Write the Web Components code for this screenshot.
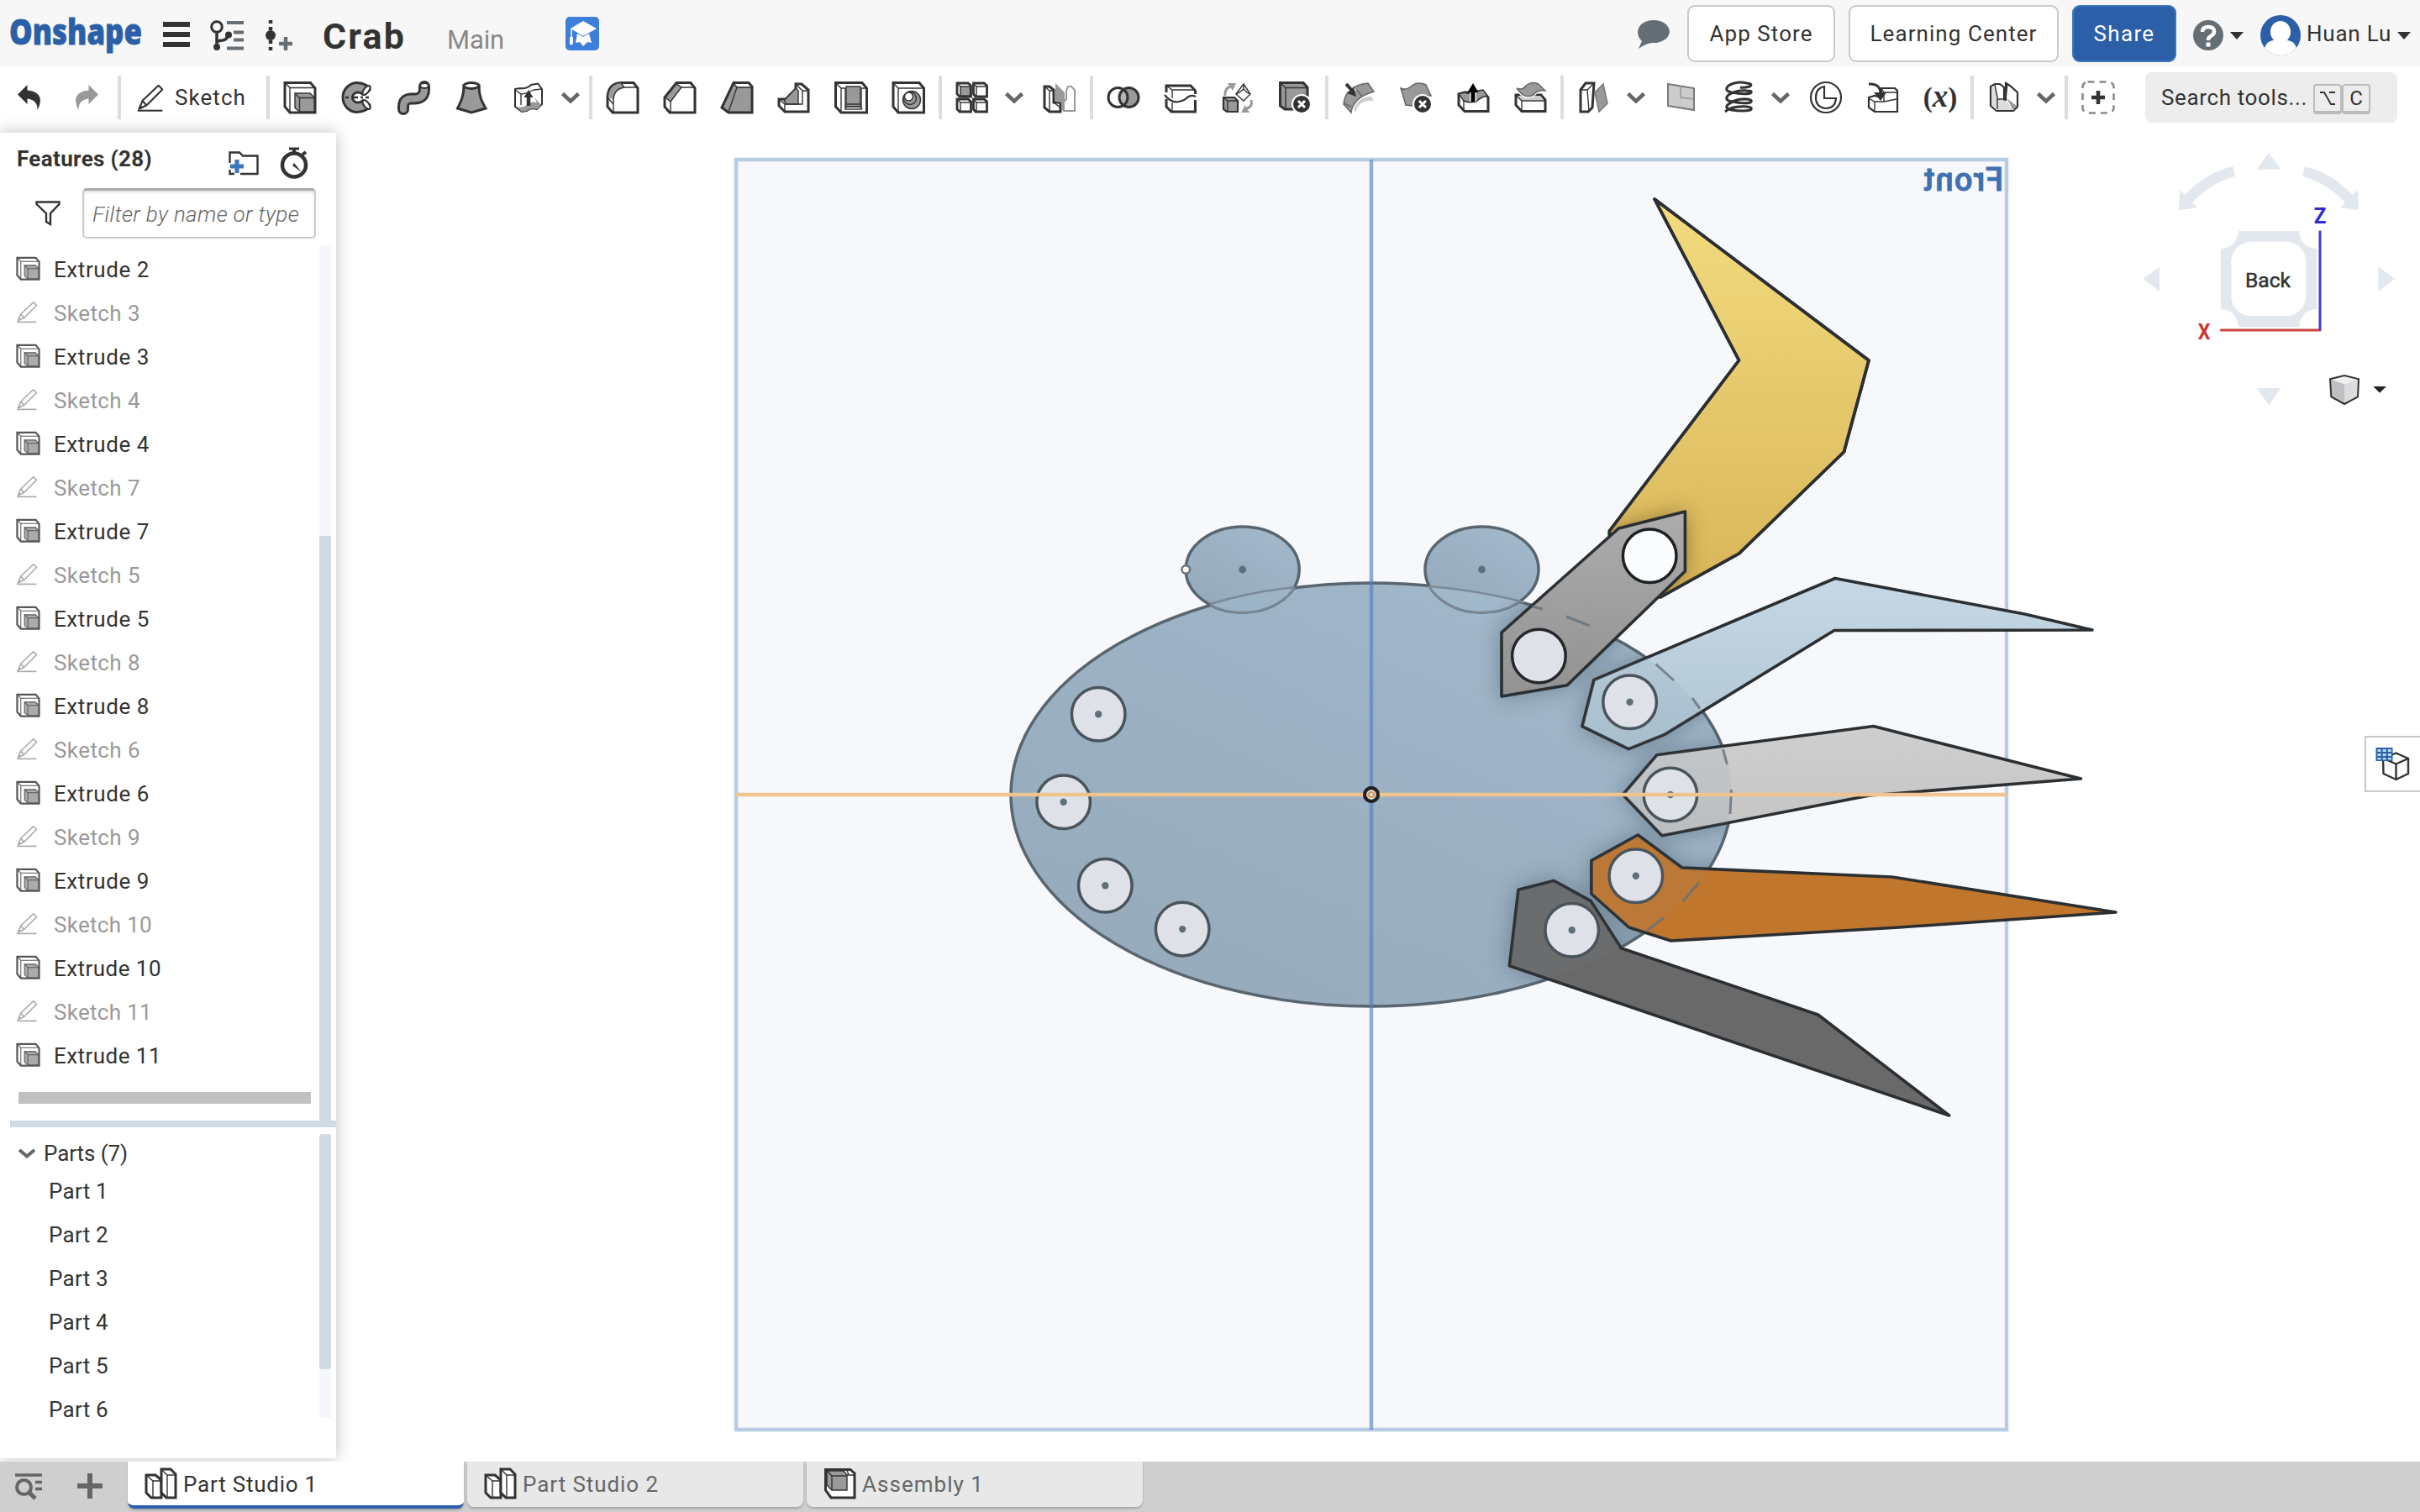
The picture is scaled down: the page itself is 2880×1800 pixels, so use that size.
<!DOCTYPE html>
<html lang="en">
<head>
<meta charset="utf-8">
<title>Crab</title>
<style>
html,body{margin:0;width:2880px;height:1800px;overflow:hidden;background:#fff}
</style>
</head>
<body>
<cad-app></cad-app>
<script>
const ICONS = {
  extrude:`<path class="o w" d="M2 2.500H32.500L38 9V38H8L2 31Z"/><path class="t" d="M2 2.500L8 8.500H38M8 8.500V37"/><path class="t g" d="M14 15H32L37 20V37H19.500L14 32.500Z"/><path class="t" d="M14 15L19.500 20.500H37M19.500 20.500V37"/>`,
  revolve:`<path class="o g" d="M31 5.500Q26 2.500 20 2.500A17 17.500 0 0 0 20 37.500Q26 37.500 31 34.500Q35 32 35 29L27 23.500Q24 26.500 20.500 26A6 6 0 0 1 20.500 14Q24 13.500 27 16.500L35 11Q35 8 31 5.500Z" stroke-linejoin="round"/><ellipse class="m w" cx="31" cy="11.500" rx="3" ry="6.500" transform="rotate(38 31 11.500)"/><ellipse class="m w" cx="31" cy="28.500" rx="3" ry="6.500" transform="rotate(-38 31 28.500)"/><path d="M6 20h4M16 20h5M24 20h3M30 20h4" stroke="#333" stroke-width="2.500"/>`,
  sweep:`<path d="M7 34V31Q7 22 16 21.500H21Q32 21 32 10V7" fill="none" stroke="#333" stroke-width="14" stroke-linecap="round"/><path d="M7 34V31Q7 22 16 21.500H21Q32 21 32 10V7" fill="none" stroke="#999" stroke-width="8" stroke-linecap="round"/><ellipse class="m w" cx="32" cy="6" rx="5" ry="3"/>`,
  loft:`<path class="o g" d="M11 6C11 18 8 24 3.500 33L20 38L37 33C32 24 29 18 29 6Z"/><ellipse class="o w" cx="20" cy="6" rx="9" ry="3.500"/>`,
  thicken:`<path class="w" stroke="#333" stroke-width="2" d="M4 10L10 9Q18 10 23 5L31 3.500L36 10V28L30 34Q22 32 18 36L12 37L4 31Z"/><path d="M5 31Q12 33 17 30Q22 24 30 26L27 20L35 29L30 34Q22 32 18 36L12 37Z" fill="#999"/><path class="t" d="M4 11L11 16Q20 15 26 11L36 10M11 16V29"/><path d="M20 30V18" stroke="#333" stroke-width="4.500"/><path d="M14.500 20L20 11L25.500 20Z" fill="#333"/>`,
  chev:`<path d="M10.500 15.500L20 24.500L29.500 15.500" fill="none" stroke="#666" stroke-width="4.500"/>`,
  fillet:`<path class="o w" d="M2 20Q3 3 18 2.500H33L38 9V38H8L2 31Z"/><path class="g" d="M3 20Q4 4 18 3L22 8Q10 10 9 23Z"/><path class="t" d="M18 3L22 8H38M22 8Q9 10 9 24V37M2 20L9 28"/>`,
  chamfer:`<path class="o w" d="M2 20L16 2.500H33L38 9V38H8L2 31Z"/><path class="t g" d="M3 20L16 4L22 8L9 25Z"/><path class="t" d="M22 8H38M9 25V37"/>`,
  draft:`<path class="o g" d="M16 2.500H34L38 7V38H10L2 32Z"/><path class="w" d="M17 4H33L36 7H20Z"/><path class="t" d="M16 3L20 8H38M20 8L10 37"/>`,
  rib:`<path class="o w" d="M22 4H29L37 11V37H9L2 30V22H10L22 10Z"/><path class="t g" d="M8 24L22 9L25 12V28H11Z"/><path class="t" d="M22 4L30 12H37M30 12V28H9L2 22M9 28V37"/>`,
  shell:`<path class="o w" d="M1.500 2.500H33L38.500 9V38H8L1.500 31Z"/><path class="t g" d="M14 7H31V31H14Z"/><path class="t" d="M2 3L8 9H13M8 9V37M13 9V34H32V9H38M14 31L13 34M31 31L33 34M14 31H31M15 28H30"/>`,
  hole:`<path class="o w" d="M2 2.500H33L38.500 9V38H8L2 31Z"/><path class="t" d="M2 3L8 9H38M8 9V37"/><circle class="t g" cx="24" cy="23" r="10.500"/><circle class="t g" cx="22" cy="21" r="7.500"/><circle class="t w" cx="20.500" cy="19" r="5"/>`,
  pattern:`<g fill="none" stroke="#333" stroke-width="2.800"><path class="w" d="M2 3H15L18.500 6V19H5L2 16Z"/><path class="g" d="M6 7H17.500V18H6Z" stroke-width="1.500"/><path class="w" d="M21.500 3H34L37.500 6V19H24L21.500 16Z"/><path class="w" d="M2 22H15L18.500 25V37H5L2 34Z"/><path class="w" d="M21.500 22H34L37.500 25V37H24L21.500 34Z"/></g><path class="t" d="M2 3L6 7M21 3L25 7H37M25 7V18M2 22L6 26H18M6 26V36M21 22L25 26H37M25 26V36"/>`,
  mirror:`<path class="w" stroke="#333" stroke-width="3" d="M2 7H8L13 11V26H21V37H8L2 32Z"/><path class="t" d="M2 7L8 12V36M8 12H13M13 26L21 32"/><path d="M15 3L26 14V38L22 34V26L15 25Z" fill="#999"/><path d="M38 36H25V25L28 22V12L30 7H34L38 11Z" fill="#fff" stroke="#999" stroke-width="2"/>`,
  boolean:`<circle cx="26.500" cy="20" r="11.500" fill="#999"/><path d="M20 10.500A11.500 11.500 0 0 1 20 29.500A11.500 11.500 0 0 1 20 10.500" fill="#b5b5b5"/><circle class="o" cx="13.500" cy="20" r="11.500"/><circle class="o" cx="26.500" cy="20" r="11.500"/>`,
  split:`<path class="w" d="M3 6H32L37 12V37H9L3 31Z"/><path class="o" d="M3 14V6H32L37.500 12V16M3 22V31L9 37H37.500V23"/><path class="t" stroke-width="2" d="M3 6L10 11H37M10 11V21M10 26V36"/><path d="M1 17Q9 27 18 25Q24 24 28 20Q33 16.500 38 19" fill="none" stroke="#333" stroke-width="2.200"/>`,
  transform:`<path class="m g" d="M3 20H16L20 24V37H7L3 34Z"/><path class="t" d="M3 20L8 24H20M8 24V37"/><path class="t w" d="M18 16L27 4L35 16L27 24Z"/><path class="t" d="M18 16L22 14L27 10L31 14L35 16M27 4V10"/><path d="M5 18Q4 10 11 7" fill="none" stroke="#999" stroke-width="3"/><path d="M8 3H18L14 12Z" fill="#999"/><path d="M36 23Q38 31 31 33" fill="none" stroke="#999" stroke-width="3"/><path d="M24 38H34L29 29Z" fill="#999"/>`,
  deletepart:`<path class="o g" d="M2.500 2.500H30L35 8V34H8L2.500 30Z"/><path class="t" d="M3 3L9 8.500H35M9 8.500V33"/><circle cx="28" cy="28" r="11" fill="#333" stroke="#fff" stroke-width="2"/><path d="M24 24L32 32M32 24L24 32" stroke="#fff" stroke-width="3"/>`,
  modfillet:`<path d="M11 38Q13 20 38 13L31 3Q4 6 2 28Z" fill="#999" stroke="#666" stroke-width="1.500"/><path d="M16 38Q20 22 38 24L35 19Q20 19 14 34Z" fill="#ccc"/><path d="M17 10L24 19M3 27L11 31" stroke="#666" stroke-width="1.500"/><path d="M5 4L14 14" stroke="#fff" stroke-width="8"/><path d="M5 4L14 14" stroke="#333" stroke-width="4"/><path d="M17 19L6 15L14 7Z" fill="#333"/>`,
  deleteface:`<path d="M2 9Q8 12 14 7Q22 0 32 5L38 18Q28 16 22 23L16 30L8 29Z" fill="#999" stroke="#666" stroke-width="1.500"/><circle cx="28" cy="28" r="11" fill="#333" stroke="#fff" stroke-width="2"/><path d="M24 24L32 32M32 24L24 32" stroke="#fff" stroke-width="3"/>`,
  moveface:`<path class="o w" d="M3 16L10 14H33L38 20V36.500H10L3 29Z"/><path class="t g" d="M3 16L10 14Q16 17 20 13L32 11L37 18Q28 20 24 25Q16 27 9 24Z"/><path class="t" d="M9 24V35"/><path d="M20 25V11" stroke="#fff" stroke-width="8"/><path d="M20 25V11" stroke="#000" stroke-width="5"/><path d="M13.500 14L20 3L26.500 14Z"/>`,
  replaceface:`<path class="o w" d="M3 17H33L38 23V36.500H10L3 29Z"/><path d="M5 18H32L36 23H10Z" fill="#ccc"/><path class="t" d="M3 17L10 24H38M10 24V35"/><path d="M4 9Q11 12 15 6Q22 0 30 4L38 12Q28 11 24 17Q15 21 9 15Z" fill="#999" stroke="#fff" stroke-width="4"/><path d="M4 9Q11 12 15 6Q22 0 30 4L38 12Q28 11 24 17Q15 21 9 15Z" fill="#999" stroke="#666" stroke-width="1.500"/>`,
  plane:`<path class="o w" d="M4 11L10 3H20L18 32L13 37H4Z"/><path class="t" d="M4 11H12L19 4M12 11L14 36"/><path d="M31 4L36 27L26 37L21 14Z" fill="#999" stroke="#777" stroke-width="1.500"/>`,
  surface:`<path d="M4 4L35 9V35L4 30Z" fill="#ccc" stroke="#777" stroke-width="2"/><path d="M19 6V20L35 22" fill="none" stroke="#999" stroke-width="1.500"/>`,
  helix:`<path d="M22 8Q26 9 33 7Q38 4 30 3Q18 0 8 6Q2 12 12 14Q26 17 34 15Q38 12 30 12Q18 11 8 17Q2 23 12 25Q26 28 34 26Q38 23 30 22Q18 21 8 28Q2 33 12 35Q26 37 34 35Q38 32 30 31Q18 30 8 34L4 37" fill="none" stroke="#333" stroke-width="3"/>`,
  clock:`<circle class="m w" cx="20" cy="20" r="18" stroke-width="2.500"/><path class="m" stroke-width="2.500" d="M18 7V21H32Q31 33 20 33Q8 32 8 20Q8 9 18 7Z"/>`,
  derived:`<path class="m w" d="M3 20L10 18L18 20V9H34L37 12V37H10L3 32Z"/><path class="t" d="M3 21L10 25H21V14H36M10 25V37M21 14L18 9M21 25L36 22"/><path d="M3 4Q18 3 17 18" fill="none" stroke="#333" stroke-width="3"/><path d="M9 14L17 24L24 14Z" fill="#333"/>`,
  sheet:`<path class="m w" d="M4 7L9 4H15L20 8V23H22L22 3L27 6L36 14V31L31 36H11L4 30Z"/><path d="M5 9L10 7L12 21L11 35L5 29Z" fill="#ddd"/><path d="M12 22L22 24L32 35H12Z" fill="#ddd"/><path d="M23 21L35 30L31 35Z" fill="#999"/><path class="t" d="M9 5L12 20V34M12 22H22L24 3"/>`,
  add:`<rect x="1.500" y="1.500" width="37" height="37" rx="6" fill="none" stroke="#888" stroke-width="2.500" stroke-dasharray="8 6"/><path d="M12 20H28M20 12V28" stroke="#333" stroke-width="4.500"/>`,
  pencil:`<path class="m" stroke-width="2.800" d="M5 34L9 24L29 5L34 10L14 30Z M9 24L14 30" stroke-linejoin="round"/><path class="m" stroke-width="3" d="M3 36.500H34"/><path d="M3 36L10 33L6 29Z" fill="currentColor"/>`,
  undo:`<path d="M1 16.500L12.500 5V11.500Q28 13 28 24Q27.500 30 24.500 35Q25 23 12.500 21.500V28Z" fill="currentColor"/>`,
  parts:`<path class="o w" d="M2 10H13L20 16V37H8L2 31Z"/><path class="t" d="M2 10L10 17H20M10 17V36"/><path class="o w" d="M20 3H31L37 9V37H26L20 31Z"/><path class="t" d="M20 3L27 10H37M27 10V36"/>`,
  assembly:`<path class="o w" d="M2.500 3.500H32L37 8V37H9L2.500 28Z"/><path class="t" d="M3 4L10 10H37M28 4L30 10"/><path class="t g" d="M4 5H24L28 10V28H10L4 22Z"/><path class="t" d="M4 5L10 11H28M10 11V28"/>`
};
const ICON_CSS = `svg{display:block;overflow:visible;color:inherit}.o{fill:none;stroke:#333;stroke-width:3}.m{fill:none;stroke:currentColor;stroke-width:2.200}.t{fill:none;stroke:#333;stroke-width:1.400}.w{fill:#fff}.g{fill:#999}`;

/* Text whose tracking is adjusted to fill a given width. */
class FitText extends HTMLElement{
  connectedCallback(){
    this.attachShadow({mode:'open'}).innerHTML=`<style>:host{display:inline-block;white-space:pre;flex:none}</style><slot></slot>`;
    const w=+this.getAttribute('w'); if(!w) return;
    const n=this.textContent.length, now=this.getBoundingClientRect().width;
    this.style.letterSpacing=((w+2-now)/n).toFixed(3)+'px';
  }
}
class CadIcon extends HTMLElement{
  connectedCallback(){
    const s=this.getAttribute('size')||40;
    this.attachShadow({mode:'open'}).innerHTML=`<style>:host{display:block;flex:none;color:#333}${ICON_CSS}</style><svg width="${s}" height="${s}" viewBox="0 0 40 40">${ICONS[this.getAttribute('name')]||''}</svg>`;
  }
}
class CadHeader extends HTMLElement{
  connectedCallback(){
    this.attachShadow({mode:'open'}).innerHTML=`<style>
:host{display:flex;height:80px;flex:none;background:#f7f7f7;align-items:center;font:26px Roboto,sans-serif;color:#333}
svg{display:block;flex:none}
.title{font-size:43px;font-weight:700;margin:5px 0 0 35px}
.main{font-size:31px;color:#888;margin:14px 0 0 49px}
.r{margin-left:auto;display:flex;align-items:center}
.b{box-sizing:border-box;height:68px;border:2px solid #c9c9c9;border-radius:9px;background:#fff;display:flex;align-items:center;justify-content:center;margin-left:16px}
.s{background:#2c5fa7;border-color:#3d78bd;color:#fff}
</style>
<svg width="166" height="80" style="margin-left:8px;overflow:visible"><text x="3" y="52.500" font-family="Open Sans" font-weight="800" font-size="43" textLength="158" lengthAdjust="spacingAndGlyphs" fill="#2b5fa8" stroke="#2b5fa8" stroke-width=".8">Onshape</text></svg>
<svg width="32" height="30" style="margin:2px 0 0 20px"><path d="M0 3H32M0 15H32M0 27H32" stroke="#333" stroke-width="6"/></svg>
<svg width="40" height="36" style="margin:4px 0 0 24px" fill="none"><path d="M20 3H40M28 14.500H40M28 23.500H40M20 33.500H40" stroke="#656d75" stroke-width="4"/><path d="M8 14V30M8 27Q9 24 15 24Q21 23 21 17" stroke="#333" stroke-width="3.500"/><circle cx="8" cy="8" r="6.300" stroke="#333" stroke-width="3"/><circle cx="8" cy="32" r="4" fill="#333"/><circle cx="22" cy="17.500" r="4" fill="#333"/></svg>
<svg width="33" height="36" style="margin:4px 0 0 26px"><path d="M6 0V4M6 8V12M6 24V28M6 32V36" stroke="#333" stroke-width="4.500"/><circle cx="6" cy="18" r="6" fill="#333"/><path d="M16 28H32M24 20V36" stroke="#656d75" stroke-width="4.500"/></svg>
<fit-text class="title" w="97">Crab</fit-text>
<fit-text class="main" w="66">Main</fit-text>
<svg width="40" height="40" style="margin-left:73px"><rect width="40" height="40" rx="5" fill="#3d7edb"/><path d="M21 5L37 14L21 23L6 14Z" fill="#fff"/><path d="M14 20L21 24L28 20L31 31L26 30L21 35L17 30L12 31Z" fill="#fff"/><path d="M7 14V26" stroke="#fff" stroke-width="1.500"/><path d="M5 24H9V33H5Z" fill="#fff"/></svg>
<div class="r">
<svg width="40" height="36" style="margin-top:4px"><path d="M2 34L6 25Q1 20 1 14A19 14 0 0 1 39 14A19 14 0 0 1 18 27Q10 28 2 34Z" fill="#656d75"/></svg>
<div class="b" style="width:176px;margin-left:20px"><fit-text w="121">App Store</fit-text></div>
<div class="b" style="width:250px"><fit-text w="197">Learning Center</fit-text></div>
<div class="b s" style="width:124px"><fit-text w="71">Share</fit-text></div>
<svg width="36" height="36" style="margin:4px 0 0 20px"><circle cx="18" cy="18" r="18" fill="#656d75"/><path d="M11 14Q11 8 18 8Q25 8 25 13.500Q25 17 21 19Q18 20.500 18 24" fill="none" stroke="#fff" stroke-width="4.500"/><rect x="15.500" y="26.500" width="5" height="5" fill="#fff"/></svg>
<svg width="16" height="9" style="margin:4px 0 0 8px"><path d="M0 0H16L8 9Z" fill="#333"/></svg>
<svg width="48" height="48" style="margin:4px 0 0 20px"><defs><clipPath id="a"><circle cx="24" cy="24" r="24"/></clipPath></defs><g clip-path="url(#a)"><rect width="48" height="48" fill="#2c5fa7"/><ellipse cx="24" cy="20" rx="12" ry="13" fill="#fff"/><path d="M4 48Q4 30 17 30H31Q44 30 44 48Z" fill="#fff"/></g></svg>
<fit-text w="99" style="margin-left:7px">Huan Lu</fit-text>
<svg width="16" height="9" style="margin:4px 11px 0 7px"><path d="M0 0H16L8 9Z" fill="#333"/></svg>
</div>`;
  }
}
class CadToolbar extends HTMLElement{
  connectedCallback(){
    const list='| extrude revolve sweep loft thicken v | fillet chamfer draft rib shell hole | pattern v mirror | boolean split transform deletepart | modfillet deleteface moveface replaceface | plane v surface helix v clock derived x | sheet v | add';
    const items=list.split(' ').map(k=>k==='|'?'<i></i>':k==='v'?'<div class="v"><cad-icon name="chev"></cad-icon></div>':k==='x'?'<div class="c x">(<b>x</b>)</div>':`<div class="c"><cad-icon name="${k}"></cad-icon></div>`).join('');
    this.attachShadow({mode:'open'}).innerHTML=`<style>
:host{display:flex;box-sizing:border-box;height:70px;padding-top:2px;flex:none;background:#fff;align-items:center;font:26px Roboto,sans-serif;color:#333}
i{width:4px;height:52px;margin:0 2px;background:#ddd;flex:none}
.c{width:68px;flex:none;display:flex;justify-content:center}
.v{width:36px;flex:none;display:flex}.v cad-icon{margin-left:-4px}
.x{font:bold 33px "Liberation Serif",serif;align-items:center}.x b{font-style:italic;font-size:37px;margin:0 0 3px}
.s{box-sizing:border-box;margin-left:22px;width:300px;height:60px;border-radius:8px;background:#ededed;display:flex;align-items:center;padding-left:19px}
.k{box-sizing:border-box;height:36px;width:34px;border:2px solid #bbb;border-bottom-width:4px;border-radius:4px;font-size:24px;display:flex;align-items:center;justify-content:center}
</style>
<cad-icon name="undo" style="margin-left:20px"></cad-icon>
<cad-icon name="undo" style="margin-left:18px;transform:scaleX(-1);color:#999"></cad-icon>
<i style="margin-left:22px"></i>
<cad-icon name="pencil" size="38" style="margin-left:15px"></cad-icon>
<fit-text w="83" style="margin:0 22px 0 9px">Sketch</fit-text>${items}
<div class="s"><fit-text w="172">Search tools...</fit-text><div class="k" style="margin-left:7px;margin-top:4px"><svg width="20" height="20"><path d="M1 3H6L14 17H19M12 3H19" fill="none" stroke="#333" stroke-width="1.800"/></svg></div><div class="k" style="margin-top:4px">C</div></div>`;
  }
}
class FeatureRow extends HTMLElement{
  connectedCallback(){
    const sk=this.hasAttribute('sketch');
    this.attachShadow({mode:'open'}).innerHTML=`<style>
:host{display:flex;height:52px;align-items:center;padding-left:${sk?18:19}px;font:26px Roboto,sans-serif;color:${sk?'#999':'#333'}}
cad-icon{color:#aaa;margin:0 16px 4px 0;${sk?'':'opacity:.82'}}
</style><cad-icon name="${sk?'pencil':'extrude'}" size="${sk?30:29}"></cad-icon><slot></slot>`;
  }
}
class CadPanel extends HTMLElement{
  connectedCallback(){
    const names=['Extrude 2','Sketch 3','Extrude 3','Sketch 4','Extrude 4','Sketch 7','Extrude 7','Sketch 5','Extrude 5','Sketch 8','Extrude 8','Sketch 6','Extrude 6','Sketch 9','Extrude 9','Sketch 10','Extrude 10','Sketch 11','Extrude 11'];
    const rows=names.map(n=>{const s=n[0]==='S',x=n.length>(s?8:9);return `<feature-row ${s?'sketch':''}><fit-text w="${(s?101:112)+(x?14:0)}">${n}</fit-text></feature-row>`}).join('');
    this.attachShadow({mode:'open'}).innerHTML=`<style>
:host{display:flex;flex-direction:column;box-sizing:border-box;width:400px;flex:none;margin:8px 0 4px;background:#fff;box-shadow:0 0 18px rgba(0,0,0,.25);font:26px Roboto,sans-serif;color:#333;position:relative;z-index:2}
svg{display:block;flex:none}
.h{display:flex;height:66px;align-items:center;padding-left:20px}
.f{display:flex;height:60px;align-items:center;padding-left:42px}
.in{box-sizing:border-box;width:278px;height:60px;border:2px solid #ccc;border-top:3px solid #aaa;border-radius:5px;box-shadow:inset 0 2px 3px rgba(0,0,0,.12);display:flex;align-items:center;padding:1px 0 0 10px;font-style:italic;font-weight:300;color:#666;margin-left:26px}
.l{display:flex;height:1042px;margin-top:8px}
.rows{width:380px;padding-top:3px;box-sizing:border-box}
.bar{height:14px;width:348px;margin:17px 0 0 22px;background:#c1c1c1}
.tr{width:14px;background:#f5f7fa;display:flex;flex-direction:column}
.th{background:#d0dbe4}
.d{height:8px;background:#d0dbe4;margin-left:12px}
.p{display:flex;height:338px;margin-top:8px}
.pl{width:380px}
.ph{height:43px;display:flex;align-items:center;padding-left:22px;gap:10px;margin-top:1px}
.pr{height:52px;display:flex;align-items:center;padding-left:58px;margin-top:-2px;margin-bottom:2px}
</style>
<div class="h"><fit-text w="159" style="font-weight:700;margin-top:-4px">Features (28)</fit-text>
<svg width="36" height="29" style="margin:6px 0 0 91px"><path d="M1.500 14V1.500H13L17 5.500H34.500V27H14M1.500 22V27H7" fill="none" stroke="#333" stroke-width="2.400"/><path d="M2 18H18M10 10V26" stroke="#3877bd" stroke-width="5"/></svg>
<svg width="34" height="38" style="margin:5px 0 0 25px"><circle cx="17" cy="21.500" r="14" fill="none" stroke="#333" stroke-width="4.500"/><path d="M11 2H23" stroke="#333" stroke-width="3"/><path d="M17 3V8M27 9L31 6" stroke="#333" stroke-width="4"/><path d="M15 22L17 19L26 30Z" fill="#333"/></svg></div>
<div class="f"><svg width="30" height="30"><path d="M1.500 1.500H28.500V4L18 15V28L13 25V15L1.500 4Z" fill="none" stroke="#333" stroke-width="2.400"/></svg><div class="in"><fit-text w="244">Filter by name or type</fit-text></div></div>
<div class="l"><div class="rows">${rows}<div class="bar"></div></div><div class="tr"><div style="height:346px"></div><div class="th" style="flex:1"></div></div></div>
<div class="d"></div>
<div class="p"><div class="pl"><div class="ph"><svg width="20" height="12"><path d="M1 2L10 9.500L19 2" fill="none" stroke="#666" stroke-width="4"/></svg><fit-text w="98">Parts (7)</fit-text></div>
${[1,2,3,4,5,6].map(n=>`<div class="pr"><fit-text w="69">Part ${n}</fit-text></div>`).join('')}</div><div class="tr"><div class="th" style="height:280px;border-radius:4px"></div></div></div>`;
  }
}
class CadCanvas extends HTMLElement{
  connectedCallback(){
    const P={
      yel:'1969,237 2224,429 2194.500,538 2069.600,659 1976,711 1915.400,640 1915.400,632 2069.500,429',
      link:'1926.400,629 2005.400,609 2005.400,680 1865,815.700 1787,829 1787,753',
      blue:'1897,809.300 1882.900,864.700 1938.200,891.700 1980.400,874.700 2182.900,750.500 2490,750 2409.400,731 2183.900,688.500',
      gray:'1972,898.700 2229.600,864.500 2476.300,927 2225,947 1977.900,994.700 1931.400,946',
      org:'1949.300,994 1893.900,1024.500 1893.900,1064 1938.600,1104 1988.600,1120 2260,1104 2518,1086 2251.800,1044 2001.800,1033',
      dark:'1807,1059.300 1849.300,1048.500 1893.200,1072.700 1929.300,1128.700 2163.600,1208 2319.700,1328 1796.400,1149.800'};
    const hole=(x,y,d=1,s='#4a545c',f='#dee2e8')=>`<circle cx="${x}" cy="${y}" r="31.800" fill="${f}" stroke="${s}" stroke-width="3.500"/>${d?`<circle cx="${x}" cy="${y}" r="4.200" fill="#5f6f7a"/>`:''}`;
    const poly=(k,f)=>`<polygon points="${P[k]}" fill="${f}" stroke="#2b2f32" stroke-width="3.600" stroke-linejoin="round"/>`;
    this.attachShadow({mode:'open'}).innerHTML=`<style>:host{display:block;flex:1;position:relative;overflow:hidden;background:#fff}svg{display:block}
.cube{position:absolute;right:0;top:10px}.side{position:absolute;right:-2px;top:726px;width:68px;height:67px;box-sizing:border-box;border:2px solid #c8c8c8;background:#fff}</style>
<svg width="2480" height="1590" viewBox="400 150 2480 1590"><defs>
<linearGradient id="bd" x1="1" y1="0" x2=".2" y2="1"><stop offset="0" stop-color="#a4bacd"/><stop offset=".5" stop-color="#9cb2c4"/><stop offset="1" stop-color="#96aabb"/></linearGradient>
<linearGradient id="y" x1="0" y1="0" x2="0" y2="1"><stop offset="0" stop-color="#f3db7f"/><stop offset="1" stop-color="#d9b559"/></linearGradient>
<linearGradient id="lk" x1="0" y1="0" x2="0" y2="1"><stop offset="0" stop-color="#acacac"/><stop offset="1" stop-color="#929292"/></linearGradient>
<linearGradient id="bl" x1="0" y1="0" x2="0" y2="1"><stop offset="0" stop-color="#c6d8e5"/><stop offset="1" stop-color="#b0c4d2"/></linearGradient>
<linearGradient id="gr" x1="0" y1="0" x2="0" y2="1"><stop offset="0" stop-color="#cfcfcf"/><stop offset="1" stop-color="#c4c4c4"/></linearGradient>
<clipPath id="cb"><ellipse cx="1632" cy="946" rx="429" ry="252"/></clipPath><clipPath id="cy"><polygon points="${P.yel}"/></clipPath>
<filter id="f" x="-20%" y="-20%" width="140%" height="140%"><feGaussianBlur stdDeviation="13"/></filter></defs>
<rect x="876" y="190" width="1512" height="1512" fill="#f7f8fb" stroke="#b8cce4" stroke-width="4.500"/>
<g fill="url(#bd)" stroke="#59656f" stroke-width="3.500"><ellipse cx="1632" cy="946" rx="429" ry="252"/><ellipse cx="1478.700" cy="678" rx="67.500" ry="51"/><ellipse cx="1763.500" cy="678" rx="67.500" ry="51"/></g>
<g clip-path="url(#cb)"><ellipse cx="1478.700" cy="678" rx="68.500" ry="52" fill="#9db3c6"/><ellipse cx="1763.500" cy="678" rx="68.500" ry="52" fill="#a1b7ca"/></g>
<g clip-path="url(#cb)" fill="none" stroke="#7b8996" stroke-width="2.400"><ellipse cx="1478.700" cy="678" rx="67.500" ry="51"/><ellipse cx="1763.500" cy="678" rx="67.500" ry="51"/></g>
<path d="M1440 719Q1490 704 1541 699M1702 698Q1760 703 1814 717" fill="none" stroke="#7b8996" stroke-width="2.400"/>
<g clip-path="url(#cb)" fill="#455562"><g opacity=".48" filter="url(#f)">${['link','blue','gray','org','dark'].map(k=>`<polygon points="${P[k]}" stroke="#455562" stroke-width="6"/>`).join('')}</g></g>
<g fill="#5f6f7a"><circle cx="1478.700" cy="678" r="4.400"/><circle cx="1763.500" cy="678" r="4.400"/></g><circle cx="1411.300" cy="678" r="4.800" fill="#fff" stroke="#66717b" stroke-width="2.500"/>
${hole(1307.2,850.3)}${hole(1265.7,954.7)}${hole(1315.3,1054.3)}${hole(1407.2,1106.1)}
${poly('yel','url(#y)')}<g clip-path="url(#cy)"><polygon points="${P.link}" fill="#5d4a14" opacity=".6" filter="url(#f)"/></g><polygon points="${P.yel}" fill="none" stroke="#2b2f32" stroke-width="3.600" stroke-linejoin="round"/>
${poly('blue','url(#bl)')}${poly('gray','url(#gr)')}${poly('org','#c0762c')}${poly('dark','#696969')}${poly('link','url(#lk)')}
<g clip-path="url(#cb)" fill="#7f9bb0"><g opacity=".13"><polygon points="${P.blue}"/><polygon points="${P.gray}"/></g><g opacity=".08"><polygon points="${P.org}"/><polygon points="${P.dark}"/></g></g>
<path d="M1823 722L1836 725M1864 734L1892 745M1970.500 790.500L1992 810M2014 831L2023 843.500M2050.500 892L2055.500 910M2060.500 940L2059 969M2022 1050.500L2003 1073M1979.500 1092.500L1960 1108" stroke="#66717a" stroke-opacity=".8" stroke-width="3" fill="none"/>
${hole(1963.2,661.7,0,'#1d2022','#fbfcfd')}${hole(1831.4,781,0,'#24282b')}${hole(1939.600,835.700)}${hole(1987.900,946)}${hole(1946.800,1042.700)}${hole(1870.700,1107.300)}
<path d="M1632 190V1702" stroke="#4f80bd" stroke-opacity=".62" stroke-width="4.500"/>
<circle cx="1632" cy="946" r="8" fill="#eee5da" stroke="#222" stroke-width="4"/>
<path d="M876 946H2388" stroke="#efc48f" stroke-width="4.500"/>
<circle cx="1632" cy="946" r="3" fill="#eee5da" stroke="#c99a66" stroke-width="2"/><circle cx="1632" cy="946" r="8" fill="none" stroke="#222" stroke-width="4"/>
<text transform="translate(2384 227) scale(-1 1)" font-family="Roboto" font-weight="500" font-size="38" textLength="95" fill="#3f70b1" stroke="#3f70b1" stroke-width=".9">Front</text></svg>
<svg class="cube" width="360" height="340" viewBox="0 0 1080 1020"><g fill="#e3e8ef"><path d="M540 66L584 125H497ZM540 966L584 906H497ZM91 516L150 472V561ZM990 516L931 472V561Z"/>
<path d="M411 114L420 149Q335 172 267 243L285 262L219 270L222 199L241 215Q320 135 411 114Z"/><path d="M669 114L660 149Q745 172 813 243L795 262L861 270L858 199L839 215Q760 135 669 114Z"/>
<path d="M432 345H648Q655 405 712 408V624Q655 625 648 688H432Q425 625 368 624V408Q425 405 432 345Z"/></g><rect x="406" y="383" width="267" height="266" rx="72" fill="#fff"/>
<path d="M370 699H723" stroke="#cb4440" stroke-width="9" stroke-linecap="round"/><path d="M723 347V697" stroke="#3d3fd6" stroke-width="9" stroke-linecap="round"/>
<g font-family="Roboto" font-size="74"><text x="456" y="546" textLength="162" lengthAdjust="spacingAndGlyphs" fill="#333" stroke="#333" stroke-width="1.500">Back</text><text x="701" y="318" font-weight="700" font-size="80" textLength="44" lengthAdjust="spacingAndGlyphs" fill="#2a2cdc">Z</text><text x="287" y="732" font-weight="700" font-size="80" textLength="44" lengthAdjust="spacingAndGlyphs" fill="#cb3633">X</text></g>
<path d="M759 874L810 861L861 874L858 937L810 963L763 937Z" fill="#dcdcde"/><path d="M759 874L810 892V963L763 937Z" fill="#bfbfc1"/><path d="M759 874L810 861L861 874L810 892Z" fill="#f0f0f0"/><path d="M759 874L810 861L861 874L858 937L810 963L763 937Z" fill="none" stroke="#333" stroke-width="6"/><path d="M913 900H960L936 923Z" fill="#222"/></svg>
<div class="side"><svg width="64" height="63"><path d="M20 25L35.500 18.500L50 25V43L35.500 50L20.500 43Z" fill="#fff" stroke="#333" stroke-width="2.400"/><path d="M20.500 25L35.500 31.500L50 25M35.500 31.500V50" fill="none" stroke="#333" stroke-width="2.400"/><rect x="11.500" y="12" width="20" height="16" fill="#2c5fa7"/><path d="M13.500 14h4v3h-4zm6.200 0h4v3h-4zm6.200 0h4v3h-4zM13.500 19h4v3h-4zm6.200 0h4v3h-4zm6.200 0h4v3h-4zM13.500 24h4v2.500h-4zm6.200 0h4v2.500h-4zm6.200 0h4v2.500h-4z" fill="#b9dcf5"/></svg></div>`;
  }
}
class CadTab extends HTMLElement{
  connectedCallback(){
    const a=this.hasAttribute('active');
    this.attachShadow({mode:'open'}).innerHTML=`<style>:host{display:flex;box-sizing:border-box;width:400px;height:${a?56:54}px;flex:none;margin-right:4px;background:${a?'#fff':'#e8e8e8'};color:${a?'#333':'#666'};${a?'border-bottom:4px solid #2b5fab;':''}border-radius:0 0 8px 8px;box-shadow:0 2px 3px rgba(0,0,0,.2);align-items:center;padding:0 0 ${a?0:2}px 20px;font:26px Roboto,sans-serif}slot{display:block;margin-top:1px}cad-icon{margin-right:6px}</style><cad-icon name="${this.getAttribute('icon')}"></cad-icon><slot></slot>`;
  }
}
class CadTabs extends HTMLElement{
  connectedCallback(){
    this.attachShadow({mode:'open'}).innerHTML=`<style>:host{display:flex;height:60px;flex:none;background:#cfcfcf;align-items:flex-start;position:relative;z-index:3}svg{display:block;flex:none}</style>
<svg width="34" height="32" style="margin:14px 0 0 18px"><path d="M0 2H32M24 10.500H32M24 18.500H32" stroke="#666" stroke-width="3.500"/><circle cx="10.500" cy="16.500" r="8.500" fill="none" stroke="#666" stroke-width="4"/><path d="M16 22L24 30" stroke="#666" stroke-width="5"/></svg>
<svg width="30" height="30" style="margin:14px 30px 0 40px"><path d="M0 15H30M15 0V30" stroke="#666" stroke-width="6"/></svg>
<cad-tab active icon="parts"><fit-text w="158">Part Studio 1</fit-text></cad-tab><cad-tab icon="parts"><fit-text w="160">Part Studio 2</fit-text></cad-tab><cad-tab icon="assembly"><fit-text w="143">Assembly 1</fit-text></cad-tab>`;
  }
}
class CadApp extends HTMLElement{
  connectedCallback(){
    this.attachShadow({mode:'open'}).innerHTML=`<style>:host{display:flex;flex-direction:column;width:2880px;height:1800px;background:#fff}main{display:flex;flex:1;min-height:0}</style>
<cad-header></cad-header><cad-toolbar></cad-toolbar><main><cad-panel></cad-panel><cad-canvas></cad-canvas></main><cad-tabs></cad-tabs>`;
  }
}
customElements.define('fit-text',FitText);
customElements.define('cad-icon',CadIcon);
customElements.define('feature-row',FeatureRow);
customElements.define('cad-tab',CadTab);
customElements.define('cad-header',CadHeader);
customElements.define('cad-toolbar',CadToolbar);
customElements.define('cad-panel',CadPanel);
customElements.define('cad-canvas',CadCanvas);
customElements.define('cad-tabs',CadTabs);
customElements.define('cad-app',CadApp);
</script>
</body>
</html>
